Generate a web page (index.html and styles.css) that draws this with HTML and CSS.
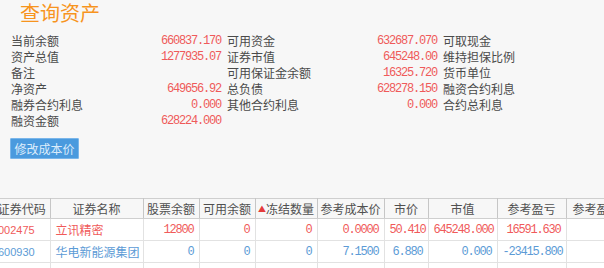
FILE: index.html
```html
<!DOCTYPE html>
<html lang="zh-CN">
<head>
<meta charset="utf-8">
<title>查询资产</title>
<link rel="stylesheet" href="styles.css">
</head>
<body>
<h1 class="title">查询资产</h1>
<div class="info">
  <div class="pair"><span>当前余额</span><span class="num">660837.170</span></div>
  <div class="pair"><span>可用资金</span><span class="num">632687.070</span></div>
  <div class="pair"><span>可取现金</span></div>

  <div class="pair"><span>资产总值</span><span class="num">1277935.07</span></div>
  <div class="pair"><span>证券市值</span><span class="num">645248.00</span></div>
  <div class="pair"><span>维持担保比例</span></div>

  <div class="pair"><span>备注</span></div>
  <div class="pair"><span>可用保证金余额</span><span class="num">16325.720</span></div>
  <div class="pair"><span>货币单位</span></div>

  <div class="pair"><span>净资产</span><span class="num">649656.92</span></div>
  <div class="pair"><span>总负债</span><span class="num">628278.150</span></div>
  <div class="pair"><span>融资合约利息</span></div>

  <div class="pair"><span>融券合约利息</span><span class="num">0.000</span></div>
  <div class="pair"><span>其他合约利息</span><span class="num">0.000</span></div>
  <div class="pair"><span>合约总利息</span></div>

  <div class="pair"><span>融资金额</span><span class="num">628224.000</span></div>
</div>
<button class="btn">修改成本价</button>

<div class="grid-wrap">
<table class="grid">
  <colgroup>
    <col style="width:56px"><col style="width:93px"><col style="width:56px"><col style="width:56px"><col style="width:62px"><col style="width:67px"><col style="width:44px"><col style="width:69px"><col style="width:69px"><col style="width:84px">
  </colgroup>
  <thead>
    <tr>
      <th>证券代码</th><th>证券名称</th><th>股票余额</th><th>可用余额</th><th><span class="sort">▲</span>冻结数量</th><th>参考成本价</th><th>市价</th><th>市值</th><th>参考盈亏</th><th class="last">参考盈亏比例</th>
    </tr>
  </thead>
  <tbody>
    <tr class="up">
      <td class="code">002475</td><td class="name">立讯精密</td><td class="n">12800</td><td class="n">0</td><td class="n">0</td><td class="n">0.0000</td><td class="n">50.410</td><td class="n">645248.000</td><td class="n">16591.630</td><td></td>
    </tr>
    <tr class="down">
      <td class="code">600930</td><td class="name">华电新能源集团</td><td class="n">0</td><td class="n">0</td><td class="n">0</td><td class="n">7.1500</td><td class="n">6.880</td><td class="n">0.000</td><td class="n">-23415.800</td><td></td>
    </tr>
    <tr class="blank">
      <td></td><td></td><td></td><td></td><td></td><td></td><td></td><td></td><td></td><td></td>
    </tr>
  </tbody>
</table>
</div>
</body>
</html>
```
FILE: styles.css
```css
* { box-sizing: border-box; }
html, body { margin: 0; padding: 0; }
body {
  background: #f7f7f7;
  font-family: "Noto Sans CJK SC", "Liberation Sans", sans-serif;
  font-size: 12px;
  color: #4a4a4a;
  width: 604px;
  height: 268px;
  overflow: hidden;
}
.title {
  margin: 0;
  padding-left: 20px;
  font-size: 20px;
  line-height: 26px;
  font-weight: normal;
  color: #f7941e;
}
.info {
  margin: 7px 0 0 11px;
  display: grid;
  grid-template-columns: 210px 210px 150px;
  column-gap: 6px;
}
.pair {
  display: flex;
  justify-content: space-between;
  align-items: center;
  height: 16px;
  line-height: 16px;
  white-space: nowrap;
}
.num, .n {
  font-family: "Liberation Mono", monospace;
  font-size: 12px;
  letter-spacing: -1.2px;
}
.num { color: #ef5a5a; }
.btn {
  display: block;
  margin: 9px 0 0 10px;
  height: 21px;
  width: 69px;
  padding: 0;
  border: 1px solid #7ab6ea;
  background: #4a9ade;
  color: #dcecfb;
  font-family: "Noto Sans CJK SC", sans-serif;
  font-size: 12px;
  line-height: 19px;
  border-radius: 1px;
}
.grid-wrap {
  margin-top: 39px;
  overflow: hidden;
}
.grid {
  margin-left: -6px;
  border-collapse: collapse;
  table-layout: fixed;
  width: 656px;
}
.grid th {
  height: 20px;
  padding: 0;
  font-weight: normal;
  line-height: 18px;
  color: #505050;
  text-align: center;
  white-space: nowrap;
  overflow: hidden;
  border-top: 1px solid #cfcfcf;
  border-bottom: 1px solid #cfcfcf;
  border-right: 1px solid #c6c6c6;
  background: #f7f7f7;
}
.grid th.last { text-align: left; padding-left: 6px; }
.sort { color: #e43b3b; font-size: 8px; vertical-align: 2px; }
.grid td {
  height: 22px;
  padding: 0 5px;
  background: #ffffff;
  border-bottom: 1px solid #e2e2e2;
  border-right: 1px solid #e2e2e2;
  white-space: nowrap;
  overflow: hidden;
}
.grid td.n { text-align: right; padding-right: 5px; }
.grid td.code {
  font-family: "Liberation Sans", sans-serif;
  font-size: 11px;
  padding-left: 4px;
}
.grid td.name { padding-left: 5px; }
.up td { color: #f05a5a; }
.down td { color: #5c9bd6; }
```
